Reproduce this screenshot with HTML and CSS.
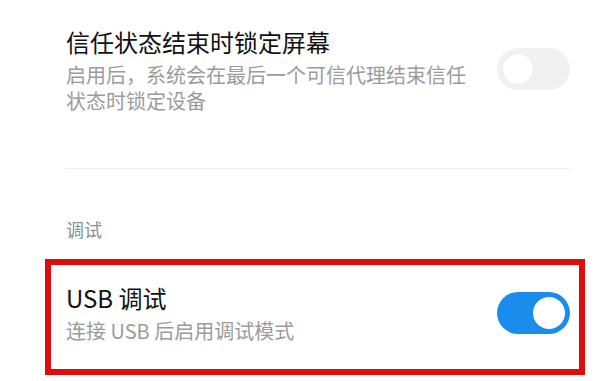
FILE: index.html
```html
<!DOCTYPE html>
<html lang="zh-CN">

<head>
    <meta charset="UTF-8">
    <meta name="viewport" content="width=device-width, initial-scale=1.0">
    <title>开发者选项</title>
    <link rel="stylesheet" href="styles.css">
</head>

<body>
    <div class="settings-list">
        <div class="setting-item">
            <div class="setting-text">
                <div class="setting-title">信任状态结束时锁定屏幕</div>
                <div class="setting-desc">启用后，系统会在最后一个可信代理结束信任状态时锁定设备</div>
            </div>
            <span class="switch"></span>
        </div>

        <div class="divider"></div>

        <div class="section-title">调试</div>

        <div class="highlight">
            <div class="setting-item">
                <div class="setting-text">
                    <div class="setting-title">USB 调试</div>
                    <div class="setting-desc">连接 USB 后启用调试模式</div>
                </div>
                <span class="switch on"></span>
            </div>
        </div>
    </div>
</body>

</html>
```

FILE: styles.css
```css
* {
    margin: 0;
    padding: 0;
    box-sizing: border-box;
}

body {
    font-family: "Noto Sans CJK SC", "Noto Sans", sans-serif;
    background-color: #fff;
    color: #111;
}

.settings-list {
    padding: 26px 35px 0 66px;
}

.setting-item {
    display: flex;
    align-items: center;
    gap: 28px;
}

.setting-text {
    flex: 1;
}

.setting-title {
    font-size: 24px;
    line-height: 32px;
    color: #111;
    margin-bottom: 4px;
}

.setting-desc {
    font-size: 20px;
    line-height: 26px;
    color: #9b9b9b;
}

/* 开关 */
.switch {
    position: relative;
    flex-shrink: 0;
    width: 73px;
    height: 42px;
    border-radius: 21px;
    background: #f1f1f1;
    margin-top: -2px;
}

.switch::after {
    content: '';
    position: absolute;
    top: 6px;
    left: 6px;
    width: 30px;
    height: 30px;
    border-radius: 50%;
    background: #fff;
    box-shadow: 0 0 2px rgba(0, 0, 0, 0.06);
}

.switch.on {
    background: #198cec;
    margin-top: 0;
}

.switch.on::after {
    top: 5px;
    left: auto;
    right: 5px;
    width: 32px;
    height: 32px;
    box-shadow: none;
}

.divider {
    height: 1px;
    background: #ececec;
    margin: 54px 0 0 -1px;
}

.section-title {
    font-size: 18px;
    line-height: 24px;
    color: #8a8f98;
    margin-top: 48px;
}

/* 红框标注 */
.highlight {
    margin: 18px -15px 0 -21px;
    border: 6px solid #e10b0b;
    padding: 17px 9px 25px 15px;
}
```
